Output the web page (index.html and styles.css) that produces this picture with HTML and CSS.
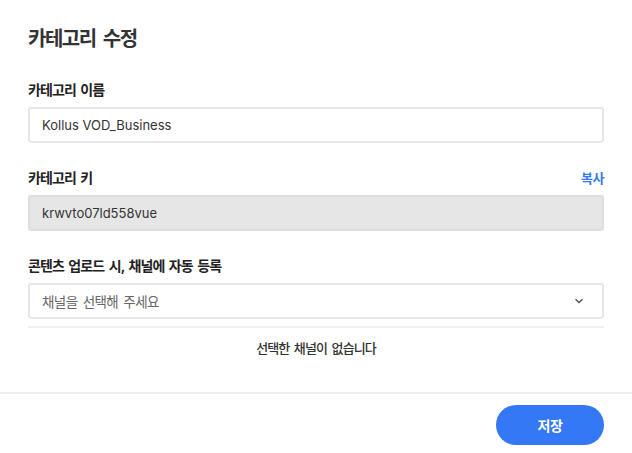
FILE: index.html
```html
<!DOCTYPE html>
<html lang="ko">
<head>
<meta charset="utf-8">
<title>카테고리 수정</title>
<link rel="stylesheet" href="styles.css">
</head>
<body>
<div class="dialog">
  <div class="content">
    <h1 class="title">카테고리 수정</h1>
    <div class="field">
      <div class="label-row"><label class="label">카테고리 이름</label></div>
      <div class="input">Kollus VOD_Business</div>
    </div>
    <div class="field">
      <div class="label-row"><label class="label">카테고리 키</label><a class="copy">복사</a></div>
      <div class="input disabled">krwvto07ld558vue</div>
    </div>
    <div class="field">
      <div class="label-row"><label class="label">콘텐츠 업로드 시, 채널에 자동 등록</label></div>
      <div class="input select">
        <span class="placeholder">채널을 선택해 주세요</span>
        <svg class="chev" width="10" height="6" viewBox="0 0 10 6"><path d="M1.5 1.2 L5 4.6 L8.5 1.2" fill="none" stroke="#555" stroke-width="1.4"/></svg>
      </div>
      <div class="divider"></div>
      <p class="empty">선택한 채널이 없습니다</p>
    </div>
  </div>
  <div class="footer">
    <button class="save">저장</button>
  </div>
</div>
</body>
</html>
```
FILE: styles.css
```css
html, body {
  margin: 0;
  padding: 0;
  background: #fff;
}
body {
  font-family: "Inter", "Noto Sans CJK KR", sans-serif;
  color: #222;
  width: 632px;
  height: 453px;
  overflow: hidden;
}
.dialog {
  width: 632px;
  height: 453px;
  display: flex;
  flex-direction: column;
  background: #fff;
  border-radius: 4px;
}
.content {
  box-sizing: border-box;
  height: 392px;
  padding: 25px 28px 0 28px;
  display: flex;
  flex-direction: column;
}
.title {
  margin: 0 0 26px 0;
  font-size: 20px;
  line-height: 28px;
  font-weight: 700;
  color: #333;
  letter-spacing: -1.5px;
  word-spacing: 4px;
}
.field {
  display: flex;
  flex-direction: column;
  margin-bottom: 24px;
}
.label-row {
  display: flex;
  justify-content: space-between;
  align-items: center;
  height: 20px;
  margin-bottom: 8px;
}
.label {
  font-size: 14px;
  font-weight: 700;
  color: #222;
  letter-spacing: -0.9px;
  word-spacing: 2px;
}
.copy {
  font-size: 13px;
  font-weight: 700;
  color: #3478f6;
  letter-spacing: -0.5px;
}
.input {
  box-sizing: border-box;
  height: 36px;
  border: 2px solid #e6e6e6;
  border-radius: 3px;
  padding: 0 12px;
  display: flex;
  align-items: center;
  font-size: 13px;
  color: #333;
  background: #fff;
}
.input.disabled {
  background: #e6e6e6;
  border-color: #dedede;
}
.select {
  justify-content: space-between;
}
.placeholder {
  color: #666;
  font-size: 13.5px;
  letter-spacing: -0.6px;
  word-spacing: 2px;
}
.chev {
  margin-right: 6px;
}
.divider {
  height: 2px;
  background: #f0f0f0;
  margin-top: 7px;
}
.empty {
  margin: 10px 0 0 0;
  text-align: center;
  font-size: 13px;
  line-height: 20px;
  font-weight: 500;
  color: #333;
  letter-spacing: -0.9px;
  word-spacing: 2px;
}
.footer {
  border-top: 2px solid #eeeeee;
  flex: 1;
  display: flex;
  justify-content: flex-end;
  align-items: flex-start;
  padding: 11px 28px 0 28px;
}
.save {
  width: 108px;
  height: 40px;
  border: none;
  border-radius: 20px;
  background: #3478f6;
  color: #fff;
  font-family: "Inter", "Noto Sans CJK KR", sans-serif;
  font-size: 14px;
  font-weight: 700;
  letter-spacing: -0.5px;
}
```
